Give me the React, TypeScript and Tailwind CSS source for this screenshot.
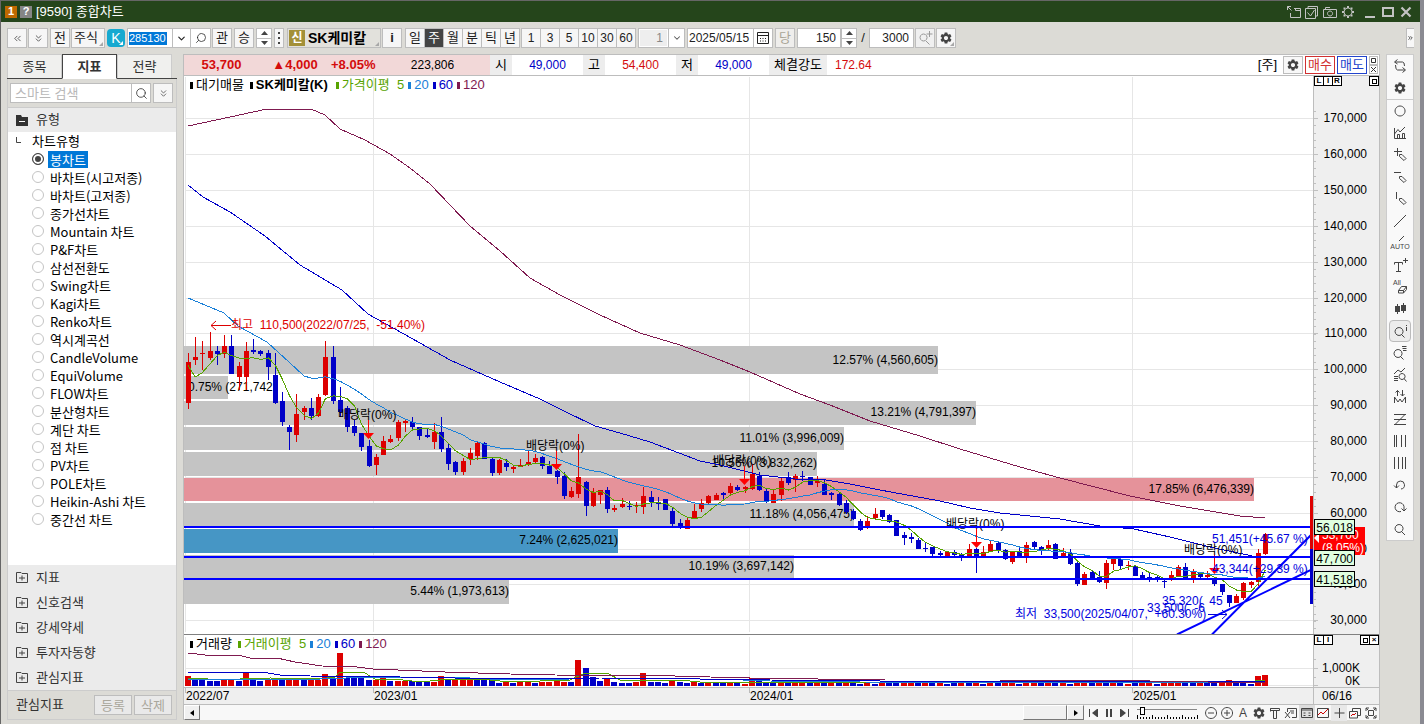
import type { ReactNode } from 'react';
import clsx from 'clsx';
import { ChevronDown, ChevronsDown, ChevronsLeft, ChevronsRight, Search } from 'lucide-react';
import { MdSettings } from 'react-icons/md';

/* [rising, high, body top, body bottom, low] */
type Candle = [number, number, number, number, number];
const candles: Candle[] = [
  [1, 353, 362, 403, 409], [1, 337, 357, 360, 365], [1, 341, 353, 354, 370], [1, 332, 351, 358, 360], [0, 346, 351, 354, 365],
  [1, 335, 346, 354, 358], [0, 335, 346, 374, 374], [1, 362, 366, 377, 390], [1, 342, 351, 377, 390], [0, 339, 350, 352, 354],
  [0, 350, 351, 354, 356], [0, 350, 353, 367, 380], [0, 353, 375, 403, 404], [0, 392, 401, 422, 426], [0, 425, 427, 432, 450],
  [1, 394, 414, 435, 442], [1, 406, 408, 412, 420], [0, 398, 408, 416, 420], [1, 394, 397, 416, 417], [1, 341, 357, 395, 396],
  [0, 346, 357, 401, 404], [0, 387, 400, 412, 417], [0, 406, 408, 427, 432], [0, 420, 426, 433, 436], [0, 433, 433, 447, 451],
  [0, 440, 446, 466, 467], [1, 454, 457, 465, 475], [1, 436, 441, 455, 455], [1, 435, 439, 442, 443], [1, 420, 422, 438, 441],
  [1, 419, 421, 423, 432], [0, 417, 422, 427, 430], [0, 427, 427, 436, 440], [0, 429, 435, 437, 438], [1, 423, 432, 442, 449],
  [0, 417, 432, 449, 452], [0, 444, 448, 464, 470], [0, 461, 462, 472, 475], [1, 458, 461, 472, 475], [1, 448, 453, 459, 465],
  [1, 441, 443, 456, 460], [0, 442, 443, 459, 459], [0, 457, 459, 473, 476], [1, 459, 460, 473, 475], [0, 459, 463, 467, 471],
  [1, 465, 467, 469, 473], [1, 459, 465, 467, 467], [1, 451, 462, 465, 466], [1, 454, 458, 462, 463], [0, 456, 457, 466, 469],
  [0, 461, 466, 474, 474], [0, 470, 471, 477, 484], [0, 472, 476, 496, 499], [1, 487, 491, 497, 498], [1, 434, 477, 494, 498],
  [0, 481, 482, 506, 516], [1, 488, 492, 506, 507], [1, 490, 490, 495, 504], [0, 487, 490, 509, 513], [1, 505, 508, 510, 512],
  [1, 498, 504, 507, 508], [0, 501, 506, 507, 510], [1, 502, 505, 506, 513], [1, 487, 496, 507, 514], [0, 491, 497, 502, 507],
  [0, 497, 503, 504, 510], [0, 499, 499, 510, 510], [0, 507, 511, 524, 526], [0, 519, 523, 528, 529], [1, 518, 520, 529, 529],
  [1, 504, 511, 518, 519], [1, 499, 503, 509, 512], [1, 495, 496, 503, 504], [1, 493, 495, 500, 500], [0, 492, 493, 495, 500],
  [1, 483, 486, 493, 496], [0, 485, 487, 490, 491], [1, 486, 487, 489, 493], [1, 464, 474, 489, 490], [0, 472, 476, 490, 491],
  [0, 489, 491, 502, 503], [1, 490, 494, 503, 503], [1, 478, 481, 495, 501], [0, 472, 477, 483, 485], [1, 474, 476, 480, 492],
  [0, 471, 476, 477, 481], [0, 477, 477, 485, 485], [1, 476, 481, 483, 487], [0, 480, 484, 495, 495], [0, 492, 493, 495, 500],
  [0, 493, 494, 505, 506], [0, 500, 503, 512, 514], [0, 509, 511, 519, 520], [0, 519, 521, 530, 531], [1, 516, 521, 526, 529],
  [1, 508, 514, 518, 519], [0, 510, 510, 517, 519], [0, 514, 515, 522, 523], [0, 520, 520, 536, 536], [0, 532, 535, 538, 545],
  [0, 533, 537, 539, 543], [0, 538, 540, 549, 549], [0, 542, 548, 549, 552], [0, 547, 547, 554, 556], [0, 551, 553, 555, 558],
  [1, 552, 552, 556, 556], [0, 550, 552, 555, 556], [0, 553, 554, 556, 561], [1, 544, 549, 556, 557], [0, 548, 549, 556, 573],
  [1, 546, 552, 556, 557], [1, 540, 544, 551, 552], [0, 542, 543, 550, 553], [0, 549, 550, 559, 560], [1, 551, 551, 562, 564],
  [0, 547, 551, 556, 558], [1, 542, 545, 557, 563], [0, 541, 542, 547, 550], [0, 546, 547, 550, 555], [1, 540, 545, 548, 551],
  [0, 543, 544, 559, 559], [1, 548, 553, 556, 556], [0, 549, 553, 564, 565], [0, 562, 563, 584, 586], [1, 572, 574, 585, 585],
  [0, 570, 572, 578, 580], [0, 571, 577, 582, 583], [1, 560, 563, 583, 589], [1, 558, 559, 564, 570], [0, 558, 559, 566, 570],
  [1, 561, 565, 566, 570], [0, 566, 566, 576, 576], [0, 572, 575, 578, 579], [0, 573, 577, 578, 582], [0, 576, 577, 579, 582],
  [0, 580, 581, 582, 588], [1, 571, 575, 580, 581], [1, 565, 567, 576, 577], [0, 563, 567, 578, 579], [1, 569, 572, 578, 583],
  [0, 573, 573, 577, 578], [1, 571, 575, 577, 579], [0, 577, 578, 584, 586], [0, 584, 584, 592, 595], [0, 595, 595, 603, 607],
  [1, 594, 596, 603, 603], [1, 582, 583, 598, 600], [1, 581, 582, 585, 588], [1, 549, 553, 582, 586], [1, 533, 534, 554, 555],
];

/* bar heights, negative when volume fell */
const volumes = [
  10, -6, -6, -5, -5, 6, 6, -5, 13, -6, -5, 6, 8, -6, 6, 7, -6, 7, 6, 12,
  -7, 33, -8, -8, -8, -6, 6, 8, -5, 5, 5, -5, -5, -4, 4, 10, -6, 6, 8, 8,
  -6, -7, -6, -3, 4, -3, 4, 4, -3, 4, 4, 5, 4, -4, 26, -18, -9, -5, 7, -4,
  -3, -3, 4, 13, -4, -4, -3, 6, -4, -3, 4, -3, 4, -3, -4, 4, -3, 2, 8, -5,
  -4, -4, 4, -3, 4, 5, -3, 4, -4, 5, -3, 4, -3, -2, 3, -2, 3, -3, -3, 3,
  4, -3, 3, -3, 3, -2, -3, 3, -3, 3, -2, 3, -3, 3, 3, -2, 3, 3, -3, 3,
  -3, 3, -2, 3, 3, -3, 3, -3, 3, -3, 2, -3, 3, 3, -2, 3, 3, 4, -4, -3,
  4, -4, -3, 4, 6, -3, -3, -2, 10, 11,
];

const RED = '#dd0000';
const BLUE = '#0000c8';
const x0 = 188.5;
const step = 7.228;
const xAt = (i: number) => Math.round(x0 + i * step - 0.5) + 0.5;
const closes = candles.map((c) => (c[0] ? c[2] : c[3]));

const average = (period: number, from: number) => {
  const points: string[] = [];
  for (let i = from; i < closes.length; i++) {
    const slice = closes.slice(i - period + 1, i + 1);
    points.push(`${xAt(i)},${(slice.reduce((a, b) => a + b, 0) / period).toFixed(1)}`);
  }
  return points.join(' ');
};

const ma5 = `188,365 195,377 202,373 209,365 ${average(5, 4)}`;
const ma20 = `188,298 224,313 238,326 267,342 289,362 304,376 311,378 318,378 ${average(20, 19)}`;
const ma60 =
  '188,185 203,197 230,212 265,236 300,265 342,290 368,314 420,343 450,360 500,382 540,399 564,411 595,426 620,433 650,442 700,461 720,465 760,475 795,479 820,479 850,484 880,490 940,501 970,508 1000,513 1060,519 1100,526 1134,529 1170,537 1210,547 1257,557';
const ma120 =
  '188,126 230,117 267,109 311,109 325,115 340,129 365,140 390,154 410,168 430,184 450,205 470,226 500,251 530,278 560,295 600,315 640,333 680,345 720,360 750,372 800,394 830,405 870,421 920,436 960,449 1020,467 1060,478 1130,496 1180,506 1240,516 1265,518';

const volumeLines = [
  ['#57a300', '188,678 205,678 210,680 270,678 320,679 335,677 340,672 355,672 365,673 375,679 395,679 420,682 450,679 480,679 510,682 570,680 585,673 607,673 620,680 680,680 700,682 860,682 1200,683 1255,681 1265,680'],
  ['#1a80d8', '188,679 320,679 373,677 450,677 510,680 570,679 715,679 770,681 860,682 1265,683'],
  ['#0000c8', '188,672 225,672 232,673 262,672 280,675 310,676 400,677 510,679 600,678 700,679 770,680 880,681 1265,682'],
  ['#7f1a50', '188,653 205,655 238,655 250,658 277,658 295,662 322,666 357,667 373,669 398,670 445,672 510,674 555,675 675,676 710,677 750,678 885,680 1000,680 1150,681 1265,683'],
];

const profile = [
  { y: 346, h: 28, x: 938, label: '12.57% (4,560,605)' },
  { y: 376, h: 23, x: 228, label: '' },
  { y: 401, h: 24, x: 976, label: '13.21% (4,791,397)' },
  { y: 427, h: 23, x: 844, label: '11.01% (3,996,009)' },
  { y: 452, h: 24, x: 817, label: '10.56% (3,832,262)' },
  { y: 478, h: 23, x: 1254, label: '17.85% (6,476,339)', fill: '#e5929a' },
  { y: 503, h: 24, x: 854, label: '11.18% (4,056,475)' },
  { y: 529, h: 24, x: 618, label: '7.24% (2,625,021)', fill: '#4696c5' },
  { y: 555, h: 23, x: 794, label: '10.19% (3,697,142)' },
  { y: 580, h: 24, x: 509, label: '5.44% (1,973,613)' },
];

const dividends = [
  [338, 419, 368.5],
  [526, 450, 556.5],
  [713, 465, 744.5],
  [946, 528, 976.5],
  [1184, 554, 1214.5],
];

const gridY = [118, 154, 190, 226, 262, 298, 333, 369, 405, 441, 477, 513, 549, 584, 620];
const years: [number, string][] = [
  [185, '2022/07'],
  [373, '2023/01'],
  [749, '2024/01'],
  [1132, '2025/01'],
];

const chartTypes = [
  '봉차트', '바차트(시고저종)', '바차트(고저종)', '종가선차트', 'Mountain 차트', 'P&F차트', '삼선전환도', 'Swing차트', 'Kagi차트', 'Renko차트',
  '역시계곡선', 'CandleVolume', 'EquiVolume', 'FLOW차트', '분산형차트', '계단 차트', '점 차트', 'PV차트', 'POLE차트', 'Heikin-Ashi 차트', '중간선 차트',
];

interface ToolProps {
  label?: string;
  className?: string;
  children?: ReactNode;
}
const Tool = ({ label, className, children }: ToolProps) => (
  <button
    type="button"
    aria-label={label}
    className={clsx('relative h-5 flex-none flex items-center justify-center border border-[#bdbdbd]', className)}
  >
    {children}
  </button>
);

const Corner = () => (
  <span className="absolute right-px bottom-px w-1 h-1 [clip-path:polygon(100%_0,100%_100%,0_100%)] bg-[#a8a8a8]" />
);

const Spin = () => (
  <div className="flex-none w-4 h-5 border border-[#bdbdbd] bg-white flex flex-col">
    <button type="button" aria-label="up" className="flex-1 flex items-center justify-center border-b border-[#bdbdbd]">
      <svg width="7" height="4"><path d="M0 4L3.5 0L7 4z" fill="#444" /></svg>
    </button>
    <button type="button" aria-label="down" className="flex-1 flex items-center justify-center">
      <svg width="7" height="4"><path d="M0 0L3.5 4L7 0z" fill="#444" /></svg>
    </button>
  </div>
);

interface GlyphProps {
  d: string;
  fill?: string;
  size?: number;
  children?: ReactNode;
}
const Glyph = ({ d, fill, size = 16, children }: GlyphProps) => (
  <svg width={size} height={size} viewBox="0 0 16 16" fill="none" stroke="currentColor">
    <path d={d} />
    {fill && <path d={fill} fill="currentColor" stroke="none" />}
    {children}
  </svg>
);

const TitleBar = () => (
  <header className="flex-none h-[22px] border-t border-[#666] bg-[#25451b] text-white flex items-center pl-1 pr-1.5">
    <span className="w-3 h-3 bg-[#bf6900] text-[11px] font-bold flex items-center justify-center">1</span>
    <span className="ml-[3px] w-3 h-3 bg-[#858585] text-[11px] font-bold flex items-center justify-center">?</span>
    <h1 className="ml-1 text-[13px]">[9590] 종합차트</h1>
    <div className="ml-auto flex items-center gap-0.5 text-[#c3c3c3]">
      <button type="button" aria-label="move"><Glyph d="M4.500 9V13.500H14.500V4.500H8M9.500 4.500v2H14.500M1.500 6V2.500H5M1.500 2.500l4 4" /></button>
      <button type="button" aria-label="copy"><Glyph d="M1.500 4.500H11.500V14.500H1.500zM4 4V2.500H13.500V12H12M3.500 8.500l3 3.500 4-6" /></button>
      <button type="button" aria-label="capture"><Glyph d="M1.500 5.500H14.500V13.500H1.500zM3.500 5V3.500H8M8 7a2.500 2.500 0 1 0 .1 0z" /></button>
      <button type="button" aria-label="settings">
        <Glyph d="M8 4a4 4 0 1 0 .1 0z" fill="M7 2h2v2H7zM7 12h2v2H7zM2 7h2v2H2zM12 7h2v2h-2zM3.500 3.500h2v2h-2zM10.500 3.500h2v2h-2zM3.500 10.500h2v2h-2zM10.500 10.500h2v2h-2z" />
      </button>
      <button type="button" aria-label="minimize" className="ml-1"><Glyph d="" fill="M3 12h10v2H3z" /></button>
      <button type="button" aria-label="maximize"><svg width="16" height="16" viewBox="0 0 16 16" fill="none" stroke="currentColor" strokeWidth="2"><path d="M3 4h10v8H3z" /></svg></button>
      <button type="button" aria-label="close"><svg width="16" height="16" viewBox="0 0 16 16" stroke="currentColor" strokeWidth="2.2"><path d="M3.500 3.500L12.500 12.500M12.500 3.500L3.500 12.500" /></svg></button>
    </div>
  </header>
);

const Toolbar = () => (
  <div className="flex-none h-8 pt-1.5 pl-1.5 flex items-start text-[13px] text-[#222]">
    <Tool label="prev" className="w-5 bg-[#f6f6f6]"><ChevronsLeft size={11} strokeWidth={1.5} /></Tool>
    <Tool label="more" className="w-5 ml-px bg-[#f6f6f6]"><ChevronsDown size={11} strokeWidth={1.5} /></Tool>
    <Tool className="w-5 ml-0.5 bg-[#f6f6f6]">전</Tool>
    <Tool className="w-[34px] ml-px pr-1 bg-[#f6f6f6]">주식<Corner /></Tool>
    <button type="button" className="relative flex-none ml-0.5 w-[18px] h-[18px] mt-px rounded bg-[#16a9d0] text-white text-sm leading-[18px]">
      K<span className="absolute right-0.5 bottom-0.5 w-1 h-1 bg-white [clip-path:polygon(100%_0,100%_100%,0_100%)]" />
    </button>
    <div className="flex-none ml-0.5 w-[84px] h-5 border border-[#bdbdbd] bg-white flex items-center">
      <span className="flex-none w-11 pl-px"><input aria-label="종목코드" defaultValue="285130" className="w-[38px] h-[13px] bg-[#0078d7] text-white text-[11px] outline-none block" /></span>
      <button type="button" aria-label="open" className="w-[19px] h-full border-x border-[#bdbdbd] flex items-center justify-center"><ChevronDown size={11} strokeWidth={2.5} /></button>
      <button type="button" aria-label="search" className="flex-1 flex justify-center"><Search size={12} strokeWidth={1.5} className="-scale-x-100" /></button>
    </div>
    <Tool className="ml-px w-5 bg-[#f6f6f6]">관</Tool>
    <Tool className="ml-0.5 w-5 bg-[#f6f6f6]">승</Tool>
    <div className="flex-none w-5 flex justify-center"><Spin /></div>
    <Tool label="menu" className="w-2.5 bg-[#f6f6f6]"><svg width="2" height="12" fill="#444"><path d="M0 0h2v2H0zM0 5h2v2H0zM0 10h2v2H0z" /></svg></Tool>
    <Tool className="ml-[3px] w-[94px] bg-[#e2e1dc] font-bold text-black !justify-start pl-px">
      <span className="w-4 h-4 leading-4 bg-[#a39038] text-white text-xs">신</span>
      <span className="ml-[3px] text-sm">SK케미칼</span>
      <Corner />
    </Tool>
    <Tool className="ml-px w-5 bg-[#f6f6f6] font-bold">i</Tool>
    <div className="flex-none ml-[3px] flex -space-x-px">
      {['일', '주', '월', '분', '틱', '년'].map((t) => (
        <Tool key={t} className={t === '주' ? 'w-5 bg-[#444] text-white border-[#444]' : 'w-5 bg-[#f6f6f6] text-[#222]'}>{t}</Tool>
      ))}
    </div>
    <div className="flex-none ml-px flex -space-x-px text-xs">
      {['1', '3', '5', '10', '30', '60'].map((t) => (
        <Tool key={t} className="w-5 bg-[#f6f6f6]">{t}</Tool>
      ))}
    </div>
    <div className="relative flex-none ml-0.5 w-[47px] h-5 border border-[#bdbdbd] bg-white text-xs text-[#888]">
      <select aria-label="단위" className="appearance-none w-[27px] h-4 m-px bg-[#eee] text-right pr-1 block"><option>1</option></select>
      <span className="absolute inset-y-0 right-0 w-4 border-l border-[#bdbdbd] flex items-center justify-center pointer-events-none"><ChevronDown size={10} strokeWidth={2.5} className="text-[#555]" /></span>
    </div>
    <div className="flex-none ml-0.5 w-[86px] h-5 border border-[#bdbdbd] bg-white flex items-center text-xs">
      <input aria-label="날짜" defaultValue="2025/05/15" className="w-[65px] flex-none pl-px outline-none" />
      <button type="button" aria-label="calendar" className="flex-1 h-full border-l border-[#bdbdbd] flex items-center justify-center"><Glyph d="M2.500 2.500H13.500V13.500H2.500zM2.500 5.500h11M5 8.500h1M7.500 8.500h1M10 8.500h1M5 11h1M7.500 11h1M10 11h1" /></button>
    </div>
    <Tool className="ml-0.5 w-5 bg-[#efeeec] text-[#a9a596]">당</Tool>
    <div className="flex-none ml-0.5 flex text-xs">
      <input aria-label="봉 개수" defaultValue="150" className="w-[44px] h-5 border border-[#bdbdbd] bg-white text-right pr-1 outline-none" />
      <Spin />
    </div>
    <span className="flex-none w-3 text-center leading-5">/</span>
    <input aria-label="전체" defaultValue="3000" className="flex-none w-[45px] h-5 border border-[#bdbdbd] bg-white text-right pr-1 text-xs outline-none" />
    <Tool label="zoom" className="ml-px w-5 bg-[#f0f0f0] text-[#999]"><Glyph d="M6.500 4a3.500 3.500 0 1 0 .1 0zM9 11l3.500 3.500M12.500 1v6M9.500 4h6" /></Tool>
    <Tool label="settings" className="ml-px w-5 bg-[#f6f6f6] text-[#444]"><MdSettings size={14} /><Corner /></Tool>
    <button type="button" aria-label="expand" className="ml-auto mr-1.5 w-2 h-5 border border-r-0 border-[#bdbdbd] bg-[#f8f8f8] flex items-center justify-center"><ChevronsRight size={8} strokeWidth={2.5} /></button>
  </div>
);

const Folder = ({ open }: { open?: boolean }) =>
  open ? (
    <svg width="12" height="11"><path d="M0 0h5l1 2h6v9H0z" fill="#333" /><path d="M3 6.500h6" stroke="#fff" /></svg>
  ) : (
    <svg width="12" height="11" fill="none" stroke="#444"><path d="M.5 .5H5l1 1H11.500V10.500H.5zM3 6h6M6 3.500v5" /></svg>
  );

const Sidebar = () => (
  <aside className="flex-none w-[170px] h-full flex flex-col text-[13px] text-[#333]">
    <nav className="flex-none h-[25px] flex border-b border-[#444]">
      {['종목', '지표', '전략'].map((t) => (
        <button
          key={t}
          type="button"
          className={t === '지표' ? 'w-[55px] h-[25px] bg-white border border-[#444] border-b-white font-bold' : 'w-[55px] h-6 border border-[#ccc] border-b-0 bg-[#f0f0ee]'}
        >
          {t}
        </button>
      ))}
    </nav>
    <div className="flex-none h-7 px-0.5 pt-1 flex items-start border-x border-[#ccc]">
      <input aria-label="스마트 검색" placeholder="스마트 검색" className="w-[122px] h-5 px-1 border border-[#bdbdbd] bg-white placeholder:text-[#b8b8b8] outline-none" />
      <Tool label="search" className="w-5 -ml-px bg-white"><Search size={13} strokeWidth={1.5} /></Tool>
      <Tool label="more" className="w-5 ml-0.5 bg-[#f6f6f6]"><ChevronsDown size={11} strokeWidth={1.5} /></Tool>
    </div>
    <div className="flex-1 min-h-0 border border-[#ccc] bg-white flex flex-col">
      <h2 className="flex-none h-6 pl-2 flex items-center gap-2 bg-[#ebebeb]"><Folder open />유형</h2>
      <div className="flex-1 min-h-0 overflow-hidden text-black font-['Noto_Sans_CJK_KR',sans-serif]">
        <div className="h-[18px] pl-2 flex items-center"><svg width="16" height="8" fill="none" stroke="#444"><path d="M.5 0v5.500H5" /></svg>차트유형</div>
        {chartTypes.map((t, i) => (
          <label key={t} className="h-[18px] pl-6 flex items-center gap-1">
            <input type="radio" name="chart" defaultChecked={i === 0} className="appearance-none flex-none w-3 h-3 rounded-full border border-[#c4c4c4] bg-white checked:border-[#444] checked:bg-[#444] checked:shadow-[inset_0_0_0_2px_#fff]" />
            <span className={clsx('px-0.5 leading-[17px] whitespace-nowrap', i === 0 && 'bg-[#0078d7] text-white')}>{t}</span>
          </label>
        ))}
      </div>
      {['지표', '신호검색', '강세약세', '투자자동향', '관심지표'].map((t) => (
        <button key={t} type="button" className="flex-none h-[25px] pl-2 flex items-center gap-2 bg-[#ebebeb]"><Folder />{t}</button>
      ))}
      <div className="flex-none h-[29px] pl-2 pr-1 border-t border-[#ccc] bg-[#dcdbd6] flex items-center">
        <span className="mr-auto">관심지표</span>
        <button type="button" className="w-[38px] h-5 border border-[#bdbdbd] bg-[#e9e9e9] text-[#aaa79c]">등록</button>
        <button type="button" className="ml-0.5 w-[38px] h-5 border border-[#bdbdbd] bg-[#e9e9e9] text-[#aaa79c]">삭제</button>
      </div>
    </div>
  </aside>
);

const QuoteBar = () => (
  <div className="flex-none h-[22px] border border-[#bdbdbd] bg-white flex items-stretch text-xs leading-5 text-black text-center">
    <div className="flex-none w-[306px] bg-[#f2d8d8] flex text-[13px] font-bold text-[#d40c0c]">
      <span className="w-[75px]">53,700</span>
      <span className="w-[72px]">▲4,000</span>
      <span className="w-[44px]">+8.05%</span>
      <span className="flex-1 text-xs leading-5 font-normal text-black">223,806</span>
    </div>
    <span className="w-[22px] bg-[#ededed] text-[13px]">시</span>
    <span className="w-[71px] text-[#0000c8]">49,000</span>
    <span className="w-[22px] bg-[#ededed] text-[13px]">고</span>
    <span className="w-[71px] text-[#d40c0c]">54,400</span>
    <span className="w-[22px] bg-[#ededed] text-[13px]">저</span>
    <span className="w-[71px] text-[#0000c8]">49,000</span>
    <span className="w-[58px] bg-[#ededed] text-[13px]">체결강도</span>
    <span className="ml-2 text-[#d40c0c]">172.64</span>
    <div className="ml-auto pr-px flex items-center gap-0.5 text-[13px]">
      <span>[주]</span>
      <button type="button" aria-label="settings" className="ml-1 w-5 h-[18px] border border-[#bdbdbd] bg-[#f8f8f8] text-[#444] flex items-center justify-center"><MdSettings size={14} /></button>
      <button type="button" className="w-[30px] h-[18px] leading-4 border border-[#d03030] text-[#d03030]">매수</button>
      <button type="button" className="w-[30px] h-[18px] leading-4 border border-[#2244cc] text-[#2244cc]">매도</button>
      <div className="flex flex-col">
        <button type="button" aria-label="restore" className="w-[9px] h-[9px] border border-[#bdbdbd] flex items-center justify-center"><svg width="5" height="5"><path d="M.5 .5h4v4h-4z" fill="none" stroke="#333" /></svg></button>
        <button type="button" aria-label="close" className="w-[9px] h-[9px] border border-[#bdbdbd] flex items-center justify-center"><svg width="5" height="5"><path d="M0 0l5 5M5 0L0 5" stroke="#333" /></svg></button>
      </div>
    </div>
  </div>
);

interface LegendProps {
  title: string;
  average: string;
  name?: string;
}
const Mark = ({ className }: { className: string }) => <i className={clsx('w-[3px] h-[7px] mr-[3px]', className)} />;
const Legend = ({ title, name, average }: LegendProps) => (
  <div className="absolute top-0 left-1.5 h-[18px] flex items-center text-[13px] whitespace-nowrap">
    <Mark className="bg-black" /><span className="mr-1.5">{title}</span>
    {name && <><Mark className="bg-black" /><b className="mr-2">{name}</b></>}
    <Mark className="bg-[#57a300]" /><span className="mr-1 text-[#57a300]">{average}&nbsp; 5</span>
    <Mark className="bg-[#1a80d8]" /><span className="mr-1 text-[#1a80d8]">20</span>
    <Mark className="bg-[#0000c8]" /><span className="mr-1 text-[#0000c8]">60</span>
    <Mark className="bg-[#7f1a50]" /><span className="text-[#7f1a50]">120</span>
  </div>
);

const PriceChart = () => (
  <svg className="block w-full h-full text-xs" role="img" aria-label="SK케미칼">
    <g transform="translate(-184 -76)" fill="none">
      {gridY.map((y) => <path key={y} d={`M185 ${y + 0.5}H1313`} stroke="#e6e6e6" />)}
      {years.map(([x]) => <path key={x} d={`M${x + 0.5} 77V632`} stroke="#e6e6e6" />)}
      {profile.map((p) => <rect key={p.y} x="184" y={p.y} width={p.x - 184} height={p.h} fill={p.fill ?? '#c4c4c4'} />)}
      {profile.map((p) => <text key={p.y} x={p.x} y={p.y + (p.y < 352 ? 18 : 15)} textAnchor="end" fill="#000">{p.label}</text>)}
      <text x="188" y="391" fill="#000">0.75% (271,742</text>
      {candles.map(([up, high, top, bottom, low], i) => (
        <g key={i} fill={up ? RED : BLUE}>
          <rect x={xAt(i) - 0.5} y={high} width="1" height={low - high} />
          <rect x={xAt(i) - 2.5} y={top} width="5" height={Math.max(bottom - top, 1)} />
        </g>
      ))}
      <g shapeRendering="crispEdges">
        <polyline points={ma5} stroke="#57a300" />
        <polyline points={ma20} stroke="#1a80d8" />
        <polyline points={ma60} stroke="#0000c8" />
        <polyline points={ma120} stroke="#7f1a50" />
      </g>
      {dividends.map(([x, y, ax]) => (
        <g key={x}>
          <text x={x} y={y} fill="#000">배당락(0%)</text>
          <path d={`M${ax} ${y + 1}v14`} stroke="#f00" />
          <path d={`M${ax - 5.5} ${y + 14}h11l-5.500 6z`} fill="#f00" />
        </g>
      ))}
      <path d="M184 527H1313M184 557H1313M184 579H1313M1177 634.500L1313 569M1212 634.500L1313 533" stroke="#0000ff" strokeWidth="2" />
      <path d="M231 325.500H211M216 321l-5 4.500 5 4.500" stroke={RED} />
      <text x="231" y="329" fill={RED}>최고&nbsp; 110,500(2022/07/25, &nbsp;-51.40%)</text>
      <g fill="#0000dd">
        <text x="1212" y="543">51,451(+45.67 %)</text>
        <text x="1212" y="573">43,344(+29.39 %)</text>
        <text x="1162" y="605">35,320( &nbsp;45</text>
        <text x="1147" y="612">33,500( &nbsp;-6</text>
        <text x="1015" y="618">최저&nbsp; 33,500(2025/04/07, &nbsp;+60.30%)</text>
      </g>
      <path d="M1208 614.500h19M1222 610l5 4.500-5 4.500" stroke="#0000dd" />
      <path d="M1311.500 496v53" stroke={RED} strokeWidth="3" />
      <path d="M1311.500 549v55" stroke={BLUE} strokeWidth="3" />
    </g>
  </svg>
);

const PriceTag = ({ y, label }: { y: number; label: string }) => (
  <g>
    <rect x="1314.500" y={y + 0.5} width="40" height="15" fill="#e0ffe0" stroke="#000" />
    <text x="1353" y={y + 13} textAnchor="end">{label}</text>
  </g>
);

const ticks = Array.from({ length: 73 }, (_, i) => Math.round(111 + i * 7.18)).filter((y) => y < 634);
const PriceAxis = () => (
  <svg className="block w-full h-full text-xs">
    <g transform="translate(-1314 -76)">
      <path d={ticks.map((y) => `M1314 ${y + 0.5}h2`).join('') + gridY.map((y) => `M1314 ${y + 0.5}h4`).join('')} stroke="#c0c0c0" />
      {gridY.map((y, i) => <text key={y} x="1367" y={y + 4} textAnchor="end">{`${170 - i * 10},000`}</text>)}
      <rect x="1314" y="527" width="51" height="28" fill="#f00" />
      <g fill="#fff"><text x="1322" y="539">53,700</text><text x="1322" y="552">(8.05%)</text></g>
      <path d="M1314 538l5-5v10z" fill="#fff" />
      <PriceTag y={519} label="56,018" />
      <PriceTag y={550} label="47,700" />
      <PriceTag y={571} label="41,518" />
    </g>
  </svg>
);

const Badge = ({ children }: { children?: ReactNode }) => (
  <button type="button" aria-label="pane option" className="w-2.5 h-2.5 -mr-px border border-black bg-white text-[8px] leading-none font-bold flex items-center justify-center">{children}</button>
);
const Square = () => <span className="w-[5px] h-[5px] border border-black" />;

const railIcons: [string, ReactNode][] = [
  ['circle', <Glyph d="M8 3a5 5 0 1 0 .1 0z" />],
  ['trend', <Glyph d="M2.500 3v10.500H14M5.500 13V9.500H7.500V13M10.500 13V8.500H12.500V13M2.500 9L6 4.500 8 7 13 2" />],
  ['cross draw', <Glyph d="M5.500 1v8M2 4.500h8M7.500 7.500h2.500l4 4-2 2-4.500-4z" />],
  ['horizontal draw', <Glyph d="M2 3.500h7M7.500 7.500h2.500l4 4-2 2-4.500-4z" />],
  ['vertical draw', <Glyph d="M4.500 1v7M7.500 7.500h2.500l4 4-2 2-4.500-4z" />],
  ['line', <Glyph d="M2 14L14 2" />],
  ['auto', <svg width="20" height="16" fill="none" stroke="currentColor"><path d="M9 6l5-5" /><text x="10" y="14" textAnchor="middle" fontSize="7" fill="currentColor" stroke="none">AUTO</text></svg>],
  ['text', <Glyph d="M4 14.500h5M6.500 14V5.500M2.500 7.500v-2H10.500v2M13.500 1v5M11 3.500h5" />],
  ['erase all', <Glyph d="M6.500 11.500l3-4h5l-3 4zM6.500 11.500v2.500h5v-2.500M11.500 14l3-3.500v-3"><text x="1" y="6" fontSize="7" fill="currentColor" stroke="none">All</text></Glyph>],
  ['candles', <Glyph d="M5.500 3v10M11.500 2v10" fill="M3 5h5v6H3zM9 4h5v6H9z" />],
  ['inspect', <Glyph d="M7 4.500a4 4 0 1 0 .1 0zM9.500 11.500l3 3M14.500 4v4M14.500 2v1" />],
  ['search list', <Glyph d="M6 4.500a4 4 0 1 0 .1 0zM8.500 11.500l3 3M10 1.500h4.500M10.500 3.500h4M11 5.500h3.500" />],
  ['search trend', <Glyph d="M2 7l4-4 3 2 4-4M2 9.500h4M2 11.500h4M2 13.500h4M10 6.500a3 3 0 1 0 .1 0zM12 11.500l2.500 3" />],
  ['signals', <Glyph d="M2.500 14V8l3.500 5 2-3 2 3 3.500-5v6M5.500 7V1.500M3.500 3.500l2-2 2 2M10.500 1v6M8.500 5l2 2 2-2" />],
  ['levels', <Glyph d="M2 3.500h12M2 8.500h12M2 13.500h12M13 3.500L3 13.500" />],
  ['bars 1', <Glyph d="M2.500 2v12M4.500 2v12M9.500 2v12M13.500 2v12" />],
  ['bars 2', <Glyph d="M2.500 2v12M6.500 2v12M10.500 2v12M13.500 2v12" />],
  ['undo', <Glyph d="M4.500 11V8a4 4 0 1 1 4.500 4M2 8.500l2.500 2.500L7 8.500" />],
  ['redo', <Glyph d="M9 12.500a4.500 4.500 0 1 1 3-5V12M9.500 9.500l2.500 2.500 2.500-2.500" />],
  ['magnify', <Glyph d="M7 3.500a4 4 0 1 0 .1 0zM9.500 10.500l3.500 3.500" />],
];

const Rail = () => (
  <div className="flex-none self-start w-7 mx-1.5 border border-[#ccc] bg-[#f9f9f9] flex flex-col text-[#444]">
    <div className="h-[45px] border-b border-[#ccc] flex flex-col">
      <button type="button" aria-label="refresh" className="h-[22px] flex items-center justify-center"><Glyph d="M5.500 1.500l-3 2.500 3 2M3 4h7.500q2 0 2 4M3.500 7q0 5 2 5H13M10.500 9.500l3 2.500-3 2.500" /></button>
      <button type="button" aria-label="settings" className="h-[22px] flex items-center justify-center"><MdSettings size={14} /></button>
    </div>
    {railIcons.map(([name, icon]) => (
      <button key={name} type="button" aria-label={name} className={clsx('flex-none flex items-center justify-center', name === 'inspect' ? 'mx-0.5 h-[22px] border border-[#bbb] rounded bg-[#ececec]' : 'h-[22px]')}>{icon}</button>
    ))}
  </div>
);

const BottomBar = () => (
  <div className="flex-none h-4 border-t border-[#bdbdbd] bg-[#f7f7f7] flex items-center text-[#444]">
    <button type="button" aria-label="scroll left" className="w-4 h-[15px] border border-[#fff] border-r-[#777] border-b-[#777] bg-[#f0f0f0] flex items-center justify-center"><svg width="4" height="6"><path d="M4 0v6L0 3z" /></svg></button>
    <div className="flex-1 h-full flex justify-end items-center bg-[#f8f8f8]">
      <span className="w-11 h-[15px] border border-[#fff] border-r-[#777] border-b-[#777] bg-[#f0f0f0]" />
    </div>
    <button type="button" aria-label="scroll right" className="w-[17px] h-[15px] border border-[#fff] border-r-[#777] border-b-[#777] bg-[#f0f0f0] flex items-center justify-center"><svg width="4" height="6"><path d="M0 0v6l4-3z" /></svg></button>
    <div className="ml-px flex">
      <button type="button" aria-label="first"><Glyph d="M4.500 4v8M12.500 4v8" fill="M12 4v8L7 8z" /></button>
      <button type="button" aria-label="pause"><Glyph d="" fill="M5 4h2v8H5zM9 4h2v8H9z" /></button>
      <button type="button" aria-label="last"><Glyph d="M3.500 4v8M11.500 4v8" fill="M4 4v8L9 8z" /></button>
    </div>
    <div className="relative ml-1 mr-1 w-[62px] h-4">
      <svg className="absolute inset-0" width="62" height="16"><path d="M0 4.500h60" stroke="#888" /><path d={Array.from({ length: 21 }, (_, i) => `M${i * 3 + 0.5} ${i % 5 ? 12 : 10}v${i % 5 ? 2 : 4}`).join('')} stroke="#000" /></svg>
      <input type="range" aria-label="속도" min="0" max="20" defaultValue="1" className="absolute inset-x-0 top-0.5 w-full h-2 appearance-none bg-transparent [&::-webkit-slider-thumb]:appearance-none [&::-webkit-slider-thumb]:w-[5px] [&::-webkit-slider-thumb]:h-2 [&::-webkit-slider-thumb]:border [&::-webkit-slider-thumb]:border-black [&::-webkit-slider-thumb]:bg-white" />
    </div>
    <div className="flex">
      <button type="button" aria-label="zoom out"><Glyph d="M8 2.500a5.500 5.500 0 1 0 .1 0zM5 8h6" /></button>
      <button type="button" aria-label="zoom in"><Glyph d="M8 2.500a5.500 5.500 0 1 0 .1 0zM5 8h6M8 5v6" /></button>
      <button type="button" aria-label="font" className="w-4 text-xs">A</button>
      <button type="button" aria-label="settings" className="w-4 flex items-center justify-center"><MdSettings size={14} /></button>
      <button type="button" aria-label="format"><Glyph d="M3.500 3.500h9v2h-9zM3.500 3.500v3M6.500 6v7.500h3V6" /></button>
      <button type="button" aria-label="edit"><Glyph d="M4.500 7V3.500h9v9H9M7 6h4M8 8h3M2 7l5 6M7 7l-5 6" /></button>
      <button type="button" aria-label="table" className="bg-[#ddd]"><Glyph d="M2.500 3.500h11v9h-11zM2 5h12M4.500 8h2M9.500 8h2M4.500 10.500h2M9.500 10.500h2" /></button>
      <button type="button" aria-label="chart"><Glyph d="M2.500 3.500h11v9h-11z"><path d="M3 10l3-3 2 2 5-5" stroke="#c00" /></Glyph></button>
      <button type="button" aria-label="crosshair" className="bg-[#e8e8e8]"><Glyph d="M8.500 3v10M3.500 8h10" /></button>
      <button type="button" aria-label="windows"><Glyph d="M5.500 6V3.500h8v7H11M2.500 6.500h8v6.500h-8z"><path d="M4 11l2-2 1 1 2-2" stroke="#c00" /></Glyph></button>
      <button type="button" aria-label="fullscreen"><Glyph d="M5.500 5.500h5v5h-5zM3 6V3h3M10 3h3v3M13 10v3h-3M6 13H3v-3M3 3l2 2M13 3l-2 2M13 13l-2-2M3 13l2-2" /></button>
    </div>
  </div>
);

const ChartPanel = () => (
  <section className="flex-1 min-w-0 ml-1.5 flex flex-col text-black">
    <QuoteBar />
    <div className="flex-1 min-h-0 flex flex-col border-x border-[#bdbdbd] bg-white">
      <div className="flex-1 min-h-0 flex border-b border-[#808080]">
        <div className="relative flex-1 min-w-0 overflow-hidden">
          <PriceChart />
          <Legend title="대기매물" name="SK케미칼(K)" average="가격이평" />
        </div>
        <div className="relative flex-none w-[66px] border-l border-[#bdbdbd] bg-[#efefef]">
          <PriceAxis />
          <div className="absolute top-0 left-0 right-px flex"><Badge>L</Badge><Badge>I</Badge><Badge>R</Badge><span className="ml-auto"><Badge><Square /></Badge></span></div>
        </div>
      </div>
      <div className="flex-none h-[53px] flex border-b border-[#bdbdbd]">
        <div className="relative flex-1 min-w-0 overflow-hidden">
          <svg className="block w-full h-full" role="img" aria-label="거래량">
            <g transform="translate(-184 -635)" fill="none" shapeRendering="crispEdges">
              <path d="M185 668.500H1313M185 685.500H1313" stroke="#e6e6e6" />
              {years.map(([x]) => <path key={x} d={`M${x + 0.5} 637V686`} stroke="#e6e6e6" />)}
              {volumes.map((v, i) => <rect key={i} x={xAt(i) - 3.5} y={686 - Math.abs(v)} width="6" height={Math.abs(v)} fill={v > 0 ? RED : BLUE} />)}
              {volumeLines.map(([color, points]) => <polyline key={color} points={points} stroke={color} />)}
            </g>
          </svg>
          <Legend title="거래량" average="거래이평" />
        </div>
        <div className="relative flex-none w-[66px] border-l border-[#bdbdbd] bg-[#efefef] text-xs">
          <svg className="block w-full h-full">
            <path d="M0 24.500h2M0 33.500h4M0 42.500h2M0 50.500h4" stroke="#c0c0c0" />
            <text x="46" y="37" textAnchor="end">1,000K</text>
            <text x="46" y="50" textAnchor="end">0K</text>
          </svg>
          <div className="absolute top-0 left-0 right-px flex"><Badge>L</Badge><Badge>I</Badge><span className="ml-auto flex"><Badge><Square /></Badge><Badge>×</Badge></span></div>
        </div>
      </div>
      <div className="flex-none h-4 flex bg-[#efefef] text-xs">
        <svg className="block flex-1 min-w-0 h-full">
          {years.map(([x, label]) => (
            <g key={x}><path d={`M${x - 183.5} 0v5`} stroke="#bbb" /><text x={x - 183} y="12">{label}</text></g>
          ))}
        </svg>
        <div className="flex-none w-[66px] border-l border-[#bdbdbd] pl-2 leading-4">06/16</div>
      </div>
      <BottomBar />
    </div>
  </section>
);

const App = () => (
  <div className="h-screen overflow-hidden flex flex-col bg-[#dcdbd6] border-l border-[#666] border-r-4 border-r-[#8a8a92] font-['Liberation_Sans','Noto_Sans_CJK_KR',sans-serif]">
    <TitleBar />
    <Toolbar />
    <main className="flex-1 min-h-0 pl-1.5 pb-1 flex">
      <Sidebar />
      <ChartPanel />
      <Rail />
    </main>
  </div>
);

export default App;
